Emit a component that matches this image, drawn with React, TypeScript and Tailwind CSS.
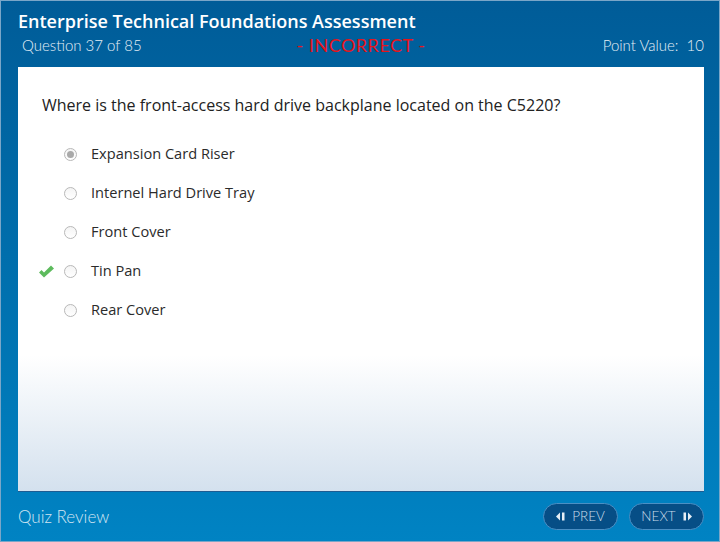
import React from 'react';

const options = [
  { label: 'Expansion Card Riser', selected: true, correct: false },
  { label: 'Internel Hard Drive Tray', selected: false, correct: false },
  { label: 'Front Cover', selected: false, correct: false },
  { label: 'Tin Pan', selected: false, correct: true },
  { label: 'Rear Cover', selected: false, correct: false },
];

const Radio: React.FC<{ selected: boolean }> = ({ selected }) => (
  <span className="flex h-[13px] w-[13px] items-center justify-center rounded-full border border-[#b8b8b8] bg-gradient-to-b from-[#f4f4f4] to-[#ffffff]">
    {selected && <span className="h-[7px] w-[7px] rounded-full bg-[#a9a9a9]" />}
  </span>
);

const Check = () => (
  <svg width="17" height="13" viewBox="0 0 17 13">
    <path d="M1 7.5 L3.5 5 L6 7.5 L13 0.5 L16 3.5 L6 12.5 Z" fill="#5dbb5d" />
  </svg>
);

const App: React.FC = () => {
  return (
    <div className="h-[542px] w-[720px] overflow-hidden bg-[#7aa6c8] p-px font-['Lato',sans-serif]">
      <div className="flex h-full flex-col bg-gradient-to-b from-[#005c98] to-[#0083c3] pl-[17px] pr-[15px]">
        <div className="flex h-[66px] flex-col">
          <h1 className="mt-[9px] font-['Open_Sans',sans-serif] text-[18px] font-semibold leading-[22px] text-white">
            Enterprise Technical Foundations Assessment
          </h1>
          <div className="mt-[4px] flex items-center text-[15px] font-light leading-[18px] text-[#e4eef6]">
            <span className="w-[250px] pl-[4px]">Question 37 of 85</span>
            <span className="flex-1 text-center text-[18px] font-normal tracking-[0.5px] text-[#e8141a]">- INCORRECT -</span>
            <span className="w-[250px] text-right">Point Value:&nbsp; 10</span>
          </div>
        </div>
        <div className="flex h-[425px] flex-col border-b border-[#1d5c92] bg-gradient-to-b from-white from-[68%] to-[#d4e1ee] font-['Open_Sans',sans-serif] text-[#222]">
          <p className="mt-[27px] pl-[24px] text-[16px] leading-[22px]">
            Where is the front-access hard drive backplane located on the C5220?
          </p>
          <ul className="mt-[28px] flex flex-col gap-[19px]">
            {options.map((o) => (
              <li key={o.label} className="flex h-[20px] items-center">
                <span className="flex w-[46px] justify-end pr-[9px]">{o.correct && <Check />}</span>
                <span className="w-[13px]">
                  <Radio selected={o.selected} />
                </span>
                <span className="ml-[14px] text-[14.6px] text-[#2b2b2b]">{o.label}</span>
              </li>
            ))}
          </ul>
        </div>
        <div className="flex flex-1 items-center justify-between">
          <span className="text-[17px] font-light text-[#d3e5f2]">Quiz Review</span>
          <div className="flex gap-[11px]">
            <button className="flex h-[27px] w-[75px] items-center justify-center gap-[7px] rounded-full border border-[#4b8fc4] bg-[#064e86] text-[13.5px] font-light text-[#cbdcea]">
              <svg width="9" height="9" viewBox="0 0 9 9">
                <path d="M0 4.5 L4 0.5 V8.5 Z" fill="#e6eef5" />
                <rect x="6" y="0.5" width="2.5" height="8" fill="#e6eef5" />
              </svg>
              PREV
            </button>
            <button className="flex h-[27px] w-[75px] items-center justify-center gap-[7px] rounded-full border border-[#4b8fc4] bg-[#064e86] text-[13.5px] font-light text-[#cbdcea]">
              NEXT
              <svg width="9" height="9" viewBox="0 0 9 9">
                <rect x="0.5" y="0.5" width="2.5" height="8" fill="#e6eef5" />
                <path d="M9 4.5 L5 0.5 V8.5 Z" fill="#e6eef5" />
              </svg>
            </button>
          </div>
        </div>
      </div>
    </div>
  );
};

export default App;
